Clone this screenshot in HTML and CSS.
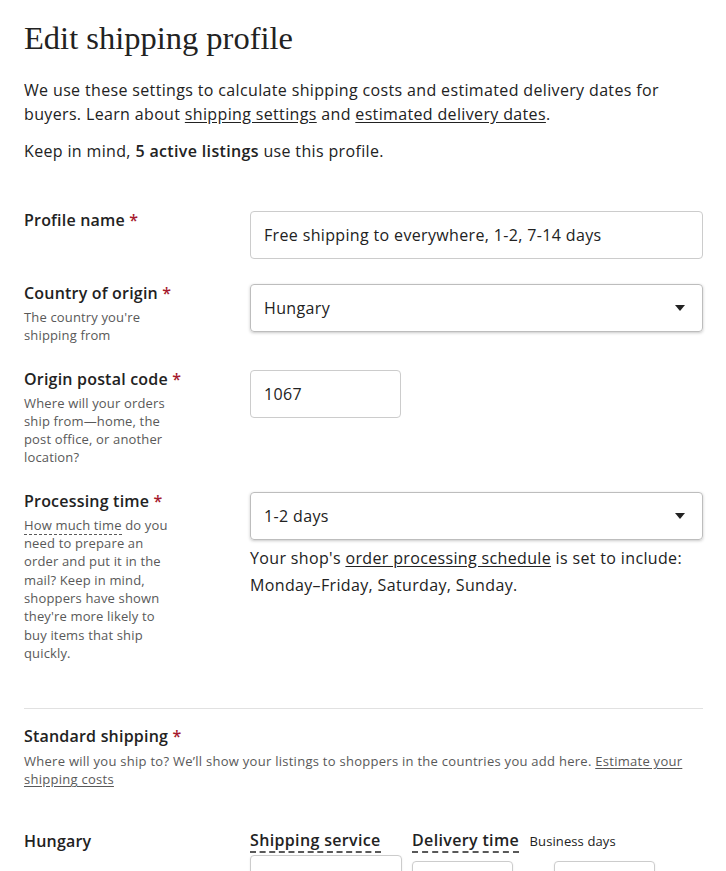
FILE: index.html
```html
<!DOCTYPE html>
<html>
<head>
<meta charset="utf-8">
<link rel="stylesheet" href="styles.css">
</head>
<body>
<main class="page">
  <h1 class="title">Edit shipping profile</h1>
  <p class="intro">We use these settings to calculate shipping costs and estimated delivery dates for buyers. Learn about <a href="#">shipping settings</a> and <a href="#">estimated delivery dates</a>.</p>
  <p class="note">Keep in mind, <strong>5 active listings</strong> use this profile.</p>

  <div class="form">
    <div class="row">
      <div class="label-col">
        <div class="label">Profile name <span class="req">*</span></div>
      </div>
      <div class="field-col">
        <div class="input wide">Free shipping to everywhere, 1-2, 7-14 days</div>
      </div>
    </div>

    <div class="row">
      <div class="label-col">
        <div class="label">Country of origin <span class="req">*</span></div>
        <div class="help">The country you're shipping from</div>
      </div>
      <div class="field-col">
        <div class="select"><span>Hungary</span><span class="caret"></span></div>
      </div>
    </div>

    <div class="row">
      <div class="label-col">
        <div class="label">Origin postal code <span class="req">*</span></div>
        <div class="help">Where will your orders ship from—home, the post office, or another location?</div>
      </div>
      <div class="field-col">
        <div class="input short">1067</div>
      </div>
    </div>

    <div class="row">
      <div class="label-col">
        <div class="label">Processing time <span class="req">*</span></div>
        <div class="help"><span class="dotted">How much time</span> do you need to prepare an order and put it in the mail? Keep in mind, shoppers have shown they're more likely to buy items that ship quickly.</div>
      </div>
      <div class="field-col">
        <div class="select"><span>1-2 days</span><span class="caret"></span></div>
        <p class="schedule">Your shop's <a href="#">order processing schedule</a> is set to include: Monday–Friday, Saturday, Sunday.</p>
      </div>
    </div>
  </div>

  <hr class="divider">

  <section class="standard">
    <div class="label">Standard shipping <span class="req">*</span></div>
    <p class="help-wide">Where will you ship to? We’ll show your listings to shoppers in the countries you add here. <a href="#">Estimate your shipping costs</a></p>
  </section>

  <div class="dest">
    <div class="dest-name">Hungary</div>
    <div class="dest-cols">
      <div class="col col-service">
        <div class="col-head"><span class="dashed">Shipping service</span></div>
        <div class="box box-service"></div>
      </div>
      <div class="col col-delivery">
        <div class="col-head"><span class="dashed">Delivery time</span> <span class="sub">Business days</span></div>
        <div class="boxes">
          <div class="box box-small"></div>
          <div class="box box-small"></div>
        </div>
      </div>
    </div>
  </div>
</main>
</body>
</html>
```

FILE: styles.css
```css
* { box-sizing: border-box; }
html, body { margin: 0; padding: 0; background: #fff; }
body {
  font-family: "Open Sans", "Liberation Sans", sans-serif;
  color: #222;
  font-size: 16px;
  letter-spacing: 0.35px;
}
.page { padding: 0 23px 0 24px; }

.title {
  font-family: "Liberation Serif", serif;
  font-weight: normal;
  font-size: 32.5px;
  line-height: 40px;
  margin: 18px 0 0;
  color: #222;
  letter-spacing: 0;
}
.intro {
  margin: 20px 0 0;
  line-height: 24px;
  color: #222;
}
.intro a, .schedule a, .help-wide a { color: inherit; text-decoration: underline; text-underline-offset: 2px; }
.note { margin: 13px 0 0; line-height: 24px; }
.note strong { font-weight: 600; }

.form { margin-top: 48px; display: flex; flex-direction: column; gap: 25px; }
.row { display: grid; grid-template-columns: 226px 1fr; }
.label {
  font-size: 16px;
  font-weight: 600;
  line-height: 20px;
  margin-top: -1px;
  letter-spacing: 0.2px;
}
.req { color: #a61a2e; }
.help {
  font-size: 13px;
  line-height: 18.3px;
  color: #595959;
  margin-top: 5px;
  max-width: 150px;
  letter-spacing: 0.15px;
}
.dotted { border-bottom: 1px dashed #595959; }

.input, .select {
  height: 48px;
  border: 1px solid #ccc;
  border-radius: 4px;
  padding: 0 13px;
  display: flex;
  align-items: center;
  font-size: 16px;
  color: #222;
}
.input.short { width: 151px; }
.select {
  justify-content: space-between;
  border-color: #bdbdbd;
  box-shadow: 0 1px 3px rgba(34,34,34,0.25);
}
.caret {
  width: 0; height: 0;
  border-left: 5px solid transparent;
  border-right: 5px solid transparent;
  border-top: 6px solid #222;
  margin-right: 4px;
}
.schedule { margin: 5px 0 0; line-height: 27px; color: #222; }

.divider { border: 0; border-top: 1px solid #e1e1e1; margin: 46px 0 0; }

.standard { margin-top: 18px; }
.help-wide {
  margin: 6px 0 0;
  font-size: 13px;
  line-height: 18.3px;
  color: #595959;
  letter-spacing: 0.27px;
}

.dest { display: grid; grid-template-columns: 226px 1fr; margin-top: 40px; }
.dest-name { font-weight: 600; line-height: 20px; margin-top: 2px; letter-spacing: 0.2px; }
.dest-cols { display: flex; gap: 10px; }
.col-head { line-height: 22px; font-weight: 600; white-space: nowrap; letter-spacing: 0.35px; }
.dashed { border-bottom: 2px dashed #595959; }
.sub { font-size: 13px; font-weight: normal; margin-left: 6px; color: #222; letter-spacing: 0.1px; }
.box {
  border: 1px solid #ccc;
  border-radius: 4px;
  height: 48px;
  box-shadow: 0 1px 2px rgba(0,0,0,0.1);
}
.box-service { width: 152px; margin-top: 4px; }
.boxes { display: flex; gap: 41px; margin-top: 9px; }
.box-small { width: 101px; }
```
